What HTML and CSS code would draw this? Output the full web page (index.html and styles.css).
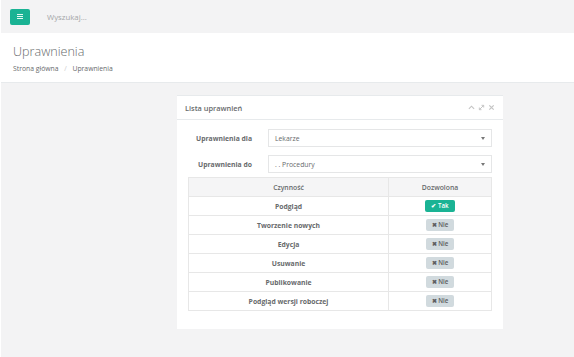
FILE: index.html
```html
<!DOCTYPE html>
<html lang="pl">
<head>
    <meta charset="UTF-8">
    <title>Uprawnienia</title>
    <link rel="stylesheet" href="styles.css">
</head>
<body>
    <div class="topbar">
        <a class="menu-btn" href="#">
            <span></span><span></span><span></span>
        </a>
        <div class="search">Wyszukaj...</div>
    </div>
    <div class="page-heading">
        <h2>Uprawnienia</h2>
        <div class="breadcrumb">
            <a href="#">Strona główna</a>
            <span class="sep">/</span>
            <span>Uprawnienia</span>
        </div>
    </div>
    <div class="content">
        <div class="ibox">
            <div class="ibox-title">
                <h5>Lista uprawnień</h5>
                <div class="ibox-tools">
                    <svg width="7" height="7" viewBox="0 0 8 8"><path d="M1 5.5 L4 2.5 L7 5.5" fill="none" stroke="#c4c4c4" stroke-width="1.3"/></svg>
                    <svg width="7" height="7" viewBox="0 0 8 8"><path d="M1.5 6.5 L6.5 1.5 M4 1.5 H6.5 V4 M1.5 4 V6.5 H4" fill="none" stroke="#c4c4c4" stroke-width="1.1"/></svg>
                    <svg width="7" height="7" viewBox="0 0 8 8"><path d="M1.5 1.5 L6.5 6.5 M6.5 1.5 L1.5 6.5" fill="none" stroke="#c4c4c4" stroke-width="1.4"/></svg>
                </div>
            </div>
            <div class="ibox-content">
                <div class="form-row">
                    <label>Uprawnienia dla</label>
                    <div class="select">Lekarze<span class="caret"></span></div>
                </div>
                <div class="form-row">
                    <label>Uprawnienia do</label>
                    <div class="select">. . Procedury<span class="caret"></span></div>
                </div>
                <table class="perm-table">
                    <thead>
                        <tr><th class="col-action">Czynność</th><th>Dozwolona</th></tr>
                    </thead>
                    <tbody>
                        <tr><td>Podgląd</td><td><span class="badge yes">&#10004; Tak</span></td></tr>
                        <tr><td>Tworzenie nowych</td><td><span class="badge no">&#10006; Nie</span></td></tr>
                        <tr><td>Edycja</td><td><span class="badge no">&#10006; Nie</span></td></tr>
                        <tr><td>Usuwanie</td><td><span class="badge no">&#10006; Nie</span></td></tr>
                        <tr><td>Publikowanie</td><td><span class="badge no">&#10006; Nie</span></td></tr>
                        <tr><td>Podgląd wersji roboczej</td><td><span class="badge no">&#10006; Nie</span></td></tr>
                    </tbody>
                </table>
            </div>
        </div>
    </div>
</body>
</html>
```

FILE: styles.css
```css
body {
    margin: 0;
    font-family: "Open Sans", "Liberation Sans", sans-serif;
    font-size: 6.8px;
    color: #676a6c;
    background-color: #f3f3f4;
    height: 357px;
    border-left: 1px solid #fff;
    box-sizing: border-box;
}
.topbar {
    height: 33px;
    display: flex;
    align-items: center;
    padding: 0 9px;
}
.menu-btn {
    width: 20px;
    height: 16px;
    background-color: #1ab394;
    border-radius: 2px;
    display: flex;
    flex-direction: column;
    justify-content: center;
    align-items: center;
    gap: 1px;
}
.menu-btn span {
    display: block;
    width: 6px;
    height: 1.3px;
    background: #e8f7f3;
}
.search {
    margin-left: 17px;
    color: #a4a6a8;
    font-size: 7.8px;
}
.page-heading {
    background: #fff;
    height: 50px;
    box-sizing: border-box;
    padding: 10px 12px 0;
    border-bottom: 1px solid #e7eaec;
}
.page-heading h2 {
    margin: 0;
    font-size: 12.6px;
    font-weight: 300;
    line-height: 17px;
}
.breadcrumb {
    margin-top: 4px;
}
.breadcrumb a {
    color: #676a6c;
    text-decoration: none;
}
.breadcrumb .sep {
    color: #ccc;
    margin: 0 4px;
}
.content {
    padding: 12px 0 0 176px;
}
.ibox {
    width: 326px;
    background: #fff;
    border-top: 1px solid #e7eaec;
}
.ibox-title {
    height: 23px;
    display: flex;
    align-items: center;
    justify-content: space-between;
    padding: 0 8px 0 8px;
    border-bottom: 1px solid #e7eaec;
}
.ibox-title h5 {
    margin: 0;
    font-size: 7.4px;
    font-weight: 600;
}
.ibox-tools {
    display: flex;
    gap: 3px;
}
.ibox-content {
    padding: 9px 11px 18px;
}
.form-row {
    display: flex;
    align-items: center;
    margin-bottom: 8px;
}
.form-row label {
    width: 64px;
    text-align: right;
    font-weight: 700;
    margin-right: 16px;
    white-space: nowrap;
}
.select {
    flex: 1;
    height: 18px;
    box-sizing: border-box;
    border: 1px solid #e5e6e7;
    display: flex;
    align-items: center;
    padding: 0 6px;
    position: relative;
}
.select .caret {
    position: absolute;
    right: 6px;
    top: 7px;
    border-left: 2px solid transparent;
    border-right: 2px solid transparent;
    border-top: 3px solid #777;
}
.perm-table {
    width: 100%;
    border-collapse: collapse;
    margin-top: -4px;
}
.perm-table th, .perm-table td {
    border: 1px solid #e7e7e7;
    text-align: center;
    height: 18px;
    padding: 0;
    font-weight: 700;
}
.perm-table th {
    background: #f5f5f6;
    font-weight: 600;
}
.perm-table .col-action {
    width: 199px;
}
.badge {
    display: inline-block;
    font-size: 6.2px;
    font-weight: 600;
    padding: 1px 6px;
    border-radius: 2px;
    line-height: 9.5px;
    min-width: 15px;
}
.badge.yes {
    background: #1ab394;
    color: #fff;
}
.badge.no {
    background: #d1dade;
    color: #5e5e5e;
}
```
